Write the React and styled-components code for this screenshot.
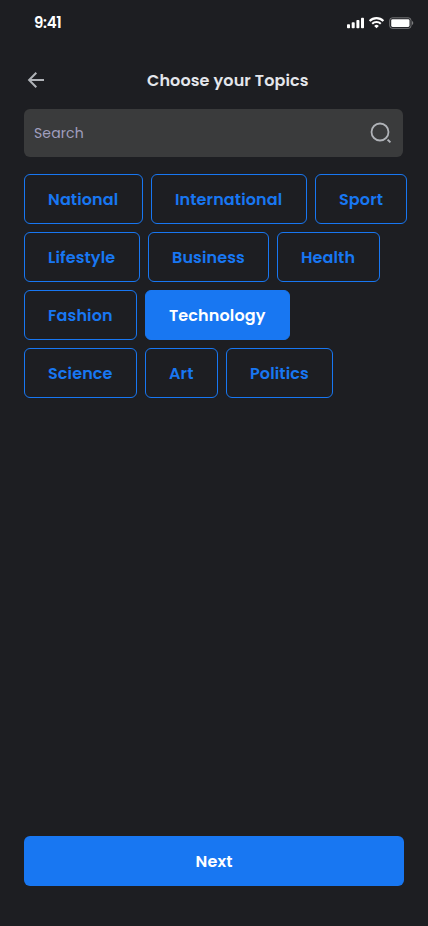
import React from 'react';
import styled, { createGlobalStyle } from 'styled-components';

const GlobalStyle = createGlobalStyle`
  *, *::before, *::after { box-sizing: border-box; }
  body {
    margin: 0;
    background: #1d1e22;
    font-family: Poppins, Inter, sans-serif;
    font-feature-settings: "cv11";
    letter-spacing: 0.12px;
  }
  button, input { font: inherit; font-feature-settings: inherit; letter-spacing: inherit; }
`;

const Screen = styled.div`
  display: flex;
  flex-direction: column;
  width: 428px;
  height: 926px;
  padding-bottom: 40px;
  overflow: hidden;
  background: #1d1e22;
`;

const StatusBar = styled.div`
  display: flex;
  align-items: center;
  justify-content: space-between;
  height: 44px;
  padding: 0 14px 0 34px;
  color: #fff;
`;

const Clock = styled.span`
  padding-top: 2px;
  font-size: 15px;
  line-height: 20px;
  font-weight: 600;
  letter-spacing: -0.35px;
`;

const StatusIcons = styled.svg`
  display: block;
  width: 67px;
  height: 12px;
  margin-top: 2px;
`;

const Header = styled.header`
  display: flex;
  align-items: center;
  height: 24px;
  margin: 24px 0 0 24px;
`;

const BackButton = styled.button`
  display: flex;
  width: 24px;
  height: 24px;
  padding: 0;
  border: 0;
  background: none;
  color: #b0b3b8;
`;

const Title = styled.h1`
  margin: 0 0 0 99px;
  padding-top: 2px;
  color: #e4e6eb;
  font-size: 16px;
  line-height: 24px;
  font-weight: 600;
  white-space: nowrap;
`;

const SearchField = styled.label`
  display: flex;
  align-items: center;
  height: 48px;
  margin: 17px 25px 0 24px;
  padding: 0 10px;
  border-radius: 6px;
  background: #3a3b3c;
  color: #b0b3b8;
`;

const SearchInput = styled.input`
  flex: 1;
  min-width: 0;
  padding: 0;
  border: 0;
  outline: 0;
  background: transparent;
  color: #e4e6eb;
  font-size: 14px;
  line-height: 21px;
  &::placeholder { color: #a09fbf; opacity: 1; }
`;

const Topics = styled.main`
  display: flex;
  flex-direction: column;
  gap: 8px;
  margin: 17px 0 0 24px;
`;

const TopicRow = styled.div`
  display: flex;
  gap: 8px;
`;

const Topic = styled.button`
  flex: none;
  width: ${({ $width }) => $width}px;
  height: 50px;
  padding: 2px 0 0 23px;
  border: 1px solid #1877f2;
  border-radius: 6px;
  background: ${({ $selected }) => ($selected ? '#1877f2' : 'transparent')};
  color: ${({ $selected }) => ($selected ? '#fff' : '#1877f2')};
  font-size: 16px;
  line-height: 24px;
  font-weight: 600;
  text-align: left;
  white-space: nowrap;
`;

const NextButton = styled.button`
  flex: none;
  height: 50px;
  margin: auto 24px 0;
  padding: 2px 0 0;
  border: 0;
  border-radius: 6px;
  background: #1877f2;
  color: #fff;
  font-size: 16px;
  line-height: 24px;
  font-weight: 600;
`;

const topicRows = [
  [
    { name: 'National', width: 119 },
    { name: 'International', width: 156 },
    { name: 'Sport', width: 92 },
  ],
  [
    { name: 'Lifestyle', width: 116 },
    { name: 'Business', width: 121 },
    { name: 'Health', width: 103 },
  ],
  [
    { name: 'Fashion', width: 113 },
    { name: 'Technology', width: 145, selected: true },
  ],
  [
    { name: 'Science', width: 113 },
    { name: 'Art', width: 73 },
    { name: 'Politics', width: 107 },
  ],
];

export default function App() {
  return (
    <>
      <GlobalStyle />
      <Screen>
        <StatusBar>
          <Clock>9:41</Clock>
          <StatusIcons viewBox="0 0 67 12" fill="currentColor" aria-hidden="true">
            <rect x="0" y="7.3" width="3" height="4" rx="0.8" />
            <rect x="4.7" y="5.3" width="3" height="6" rx="0.8" />
            <rect x="9.4" y="3" width="3" height="8.3" rx="0.8" />
            <rect x="14" y="0.7" width="3" height="10.6" rx="0.8" />
            <g fill="none" stroke="currentColor" strokeWidth="2.1">
              <path d="M22.6 4a9.8 9.8 0 0 1 13.8 0" />
              <path d="M25.2 6.8a6.1 6.1 0 0 1 8.6 0" />
            </g>
            <path d="M27.2 8.9a3.4 3.4 0 0 1 4.6 0L29.5 11.3z" />
            <rect x="42.7" y="0.8" width="21.3" height="10.6" rx="2.7" fill="none" stroke="#fff" strokeOpacity="0.38" />
            <rect x="44.2" y="2.3" width="18.3" height="7.6" rx="1.3" />
            <path d="M65 4.1v4a2.2 2.2 0 0 0 0-4z" fillOpacity="0.42" />
          </StatusIcons>
        </StatusBar>
        <Header>
          <BackButton aria-label="Back">
            <svg width="24" height="24" viewBox="0 0 24 24" fill="none" stroke="currentColor" strokeWidth="2">
              <path d="M20 12H5.2M12.3 4.8 5.1 12l7.2 7.2" />
            </svg>
          </BackButton>
          <Title>Choose your Topics</Title>
        </Header>
        <SearchField>
          <SearchInput placeholder="Search" aria-label="Search" />
          <svg width="24" height="24" viewBox="0 0 24 24" fill="none" stroke="currentColor" strokeWidth="1.8">
            <circle cx="11" cy="11" r="8.5" />
            <path d="m18.6 18.6 2.8 2.8" strokeWidth="2" />
          </svg>
        </SearchField>
        <Topics>
          {topicRows.map((row) => (
            <TopicRow key={row[0].name}>
              {row.map(({ name, width, selected }) => (
                <Topic key={name} $width={width} $selected={selected}>
                  {name}
                </Topic>
              ))}
            </TopicRow>
          ))}
        </Topics>
        <NextButton>Next</NextButton>
      </Screen>
    </>
  );
}
